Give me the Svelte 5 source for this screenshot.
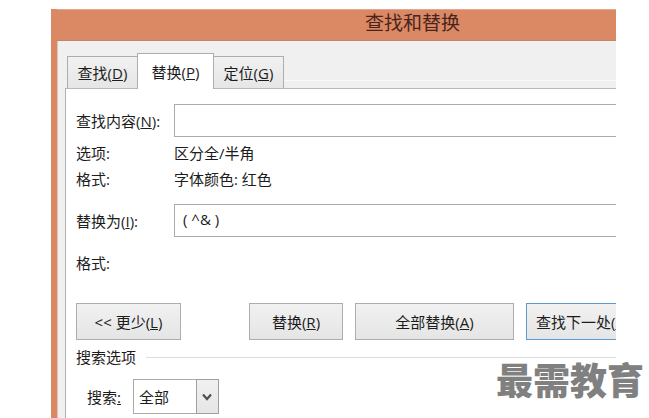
<script>
	const tabs = [
		{ id: 'find', text: '查找', key: 'D' },
		{ id: 'replace', text: '替换', key: 'P' },
		{ id: 'goto', text: '定位', key: 'G' }
	];

	let activeTab = $state('replace');
	let findText = $state('');
	let replaceText = $state('( ^& )');
	let direction = $state('all');
</script>

{#snippet mnemonic(text, key)}{text}(<u>{key}</u>){/snippet}

<main class="page">
	<section class="dialog" aria-labelledby="dialog-title">
		<h1 id="dialog-title" class="dialog__title">查找和替换</h1>

		<div class="dialog__body">
			<div class="tabs" role="tablist">
				{#each tabs as tab (tab.id)}
					<button
						type="button"
						role="tab"
						class={['tab', activeTab === tab.id && 'tab--active']}
						aria-selected={activeTab === tab.id}
						onclick={() => (activeTab = tab.id)}
					>
						{@render mnemonic(tab.text, tab.key)}
					</button>
				{/each}
				<span class="tabs__rest"></span>
			</div>

			<div class="panel" role="tabpanel">
				<div class="row row--field">
					<label for="find-text">{@render mnemonic('查找内容', 'N')}:</label>
					<input id="find-text" class="field" type="text" bind:value={findText} />
				</div>
				<div class="details">
					<div class="row row--info"><span>选项:</span><span>区分全/半角</span></div>
					<div class="row row--info"><span>格式:</span><span>字体颜色: 红色</span></div>
				</div>
				<div class="row row--field">
					<label for="replace-text">{@render mnemonic('替换为', 'I')}:</label>
					<input id="replace-text" class="field" type="text" bind:value={replaceText} />
				</div>
				<div class="details">
					<div class="row row--info row--format"><span>格式:</span></div>
				</div>

				<div class="actions">
					<button type="button" class="btn btn--less">&lt;&lt; {@render mnemonic('更少', 'L')}</button>
					<button type="button" class="btn btn--replace">{@render mnemonic('替换', 'R')}</button>
					<button type="button" class="btn btn--all">{@render mnemonic('全部替换', 'A')}</button>
					<button type="button" class="btn btn--default">{@render mnemonic('查找下一处', 'F')}</button>
				</div>

				<h2 class="group-title">搜索选项</h2>
				<div class="search">
					<label for="direction">搜索<u>:</u></label>
					<div class="select">
						<select id="direction" bind:value={direction}>
							<option value="all">全部</option>
							<option value="down">向下</option>
							<option value="up">向上</option>
						</select>
						<span class="select__arrow">
							<svg width="10" height="8" viewBox="0 0 10 8" aria-hidden="true">
								<path d="M1 1.5 5 6 9 1.5" fill="none" stroke="#505050" stroke-width="2.2" />
							</svg>
						</span>
					</div>
				</div>
			</div>
		</div>
	</section>
	<div class="watermark">最需教育</div>
</main>

<style>
	:global(body) {
		margin: 0;
		background: #fff;
	}

	.page {
		position: relative;
		box-sizing: border-box;
		min-height: 100vh;
		padding: 9px 33px 0 51px;
		color: #1c1c1c;
		font-family: 'Open Sans', 'Noto Sans CJK SC', sans-serif;
		font-size: 15px;
		line-height: 20px;
	}

	.page u {
		text-underline-offset: 1px;
	}

	.dialog {
		overflow: hidden;
		padding-left: 6px;
		background: #db8864;
	}

	.dialog__title {
		margin: 0;
		padding: 0 0 4px 152px;
		border-top: 1px solid #e3a78e;
		border-bottom: 1px solid #bd866f;
		color: #4a241c;
		font-size: 19px;
		font-weight: 400;
		line-height: 26px;
		text-align: center;
	}

	.dialog__body {
		padding: 12px 0 0 7px;
		border-left: 1px solid #d8c5bd;
		background: #f0f0f0;
	}

	.tabs {
		display: flex;
		align-items: flex-end;
		padding-left: 2px;
	}

	.tab {
		box-sizing: border-box;
		width: 71px;
		height: 32px;
		padding: 0;
		border: 1px solid #adadad;
		border-bottom: 0;
		background: linear-gradient(#f1f1f1, #e6e6e6);
		color: inherit;
		font: inherit;
		white-space: nowrap;
	}

	.tab--active {
		z-index: 1;
		width: 77px;
		height: 36px;
		margin: 0 -1px -1px;
		background: #fff;
	}

	.tabs__rest {
		flex: 1;
		height: 7px;
		border-top: 1px solid #fafafa;
	}

	.panel {
		padding: 15px 0 5px 10px;
		border-top: 1px solid #b8b8b8;
		border-left: 1px solid #b0b0b0;
		background: #fff;
	}

	.row {
		display: grid;
		grid-template-columns: 98px 1fr;
		align-items: center;
	}

	.row--info {
		height: 26px;
	}

	.field {
		box-sizing: border-box;
		width: 100%;
		height: 33px;
		padding: 0 8px 4px;
		border: 1px solid #ababab;
		border-right: 0;
		border-radius: 0;
		outline: none;
		background: #fff;
		color: inherit;
		font: inherit;
	}

	.details {
		padding: 3px 0 12px;
	}

	.row--format {
		height: 46px;
	}

	.actions {
		display: flex;
		gap: 12px;
		padding-top: 5px;
	}

	.btn {
		box-sizing: border-box;
		flex-shrink: 0;
		height: 37px;
		padding: 0 9px;
		border: 1px solid #adadad;
		border-radius: 0;
		background: linear-gradient(#f1f1f1, #e5e5e5);
		color: inherit;
		font: inherit;
		white-space: nowrap;
	}

	.btn--less {
		width: 105px;
		margin-right: 56px;
	}

	.btn--replace {
		width: 94px;
	}

	.btn--all {
		width: 159px;
	}

	.btn--default {
		border-color: #5b9bd5;
	}

	.group-title {
		display: flex;
		align-items: center;
		gap: 10px;
		margin: 7px 0 12px;
		font-size: 15px;
		font-weight: 400;
	}

	.group-title::after {
		content: '';
		flex: 1;
		height: 1px;
		background: #dcdcdc;
	}

	.search {
		display: flex;
		align-items: center;
		gap: 12px;
		padding-left: 11px;
	}

	.select {
		position: relative;
		width: 86px;
	}

	.select select {
		box-sizing: border-box;
		display: block;
		width: 100%;
		height: 35px;
		padding: 0 24px 0 5px;
		border: 1px solid #ababab;
		border-radius: 0;
		appearance: none;
		background: #fff;
		color: inherit;
		font: inherit;
	}

	.select__arrow {
		position: absolute;
		inset: 0 0 0 auto;
		box-sizing: border-box;
		display: grid;
		width: 23px;
		place-items: center;
		border: 1px solid #a0a0a0;
		background: linear-gradient(#f1f1f1, #e5e5e5);
		pointer-events: none;
	}

	.watermark {
		position: absolute;
		right: 5px;
		bottom: 20px;
		color: #808080;
		font-family: 'Noto Sans CJK SC', sans-serif;
		font-size: 37px;
		font-weight: 900;
		line-height: 40px;
	}
</style>
